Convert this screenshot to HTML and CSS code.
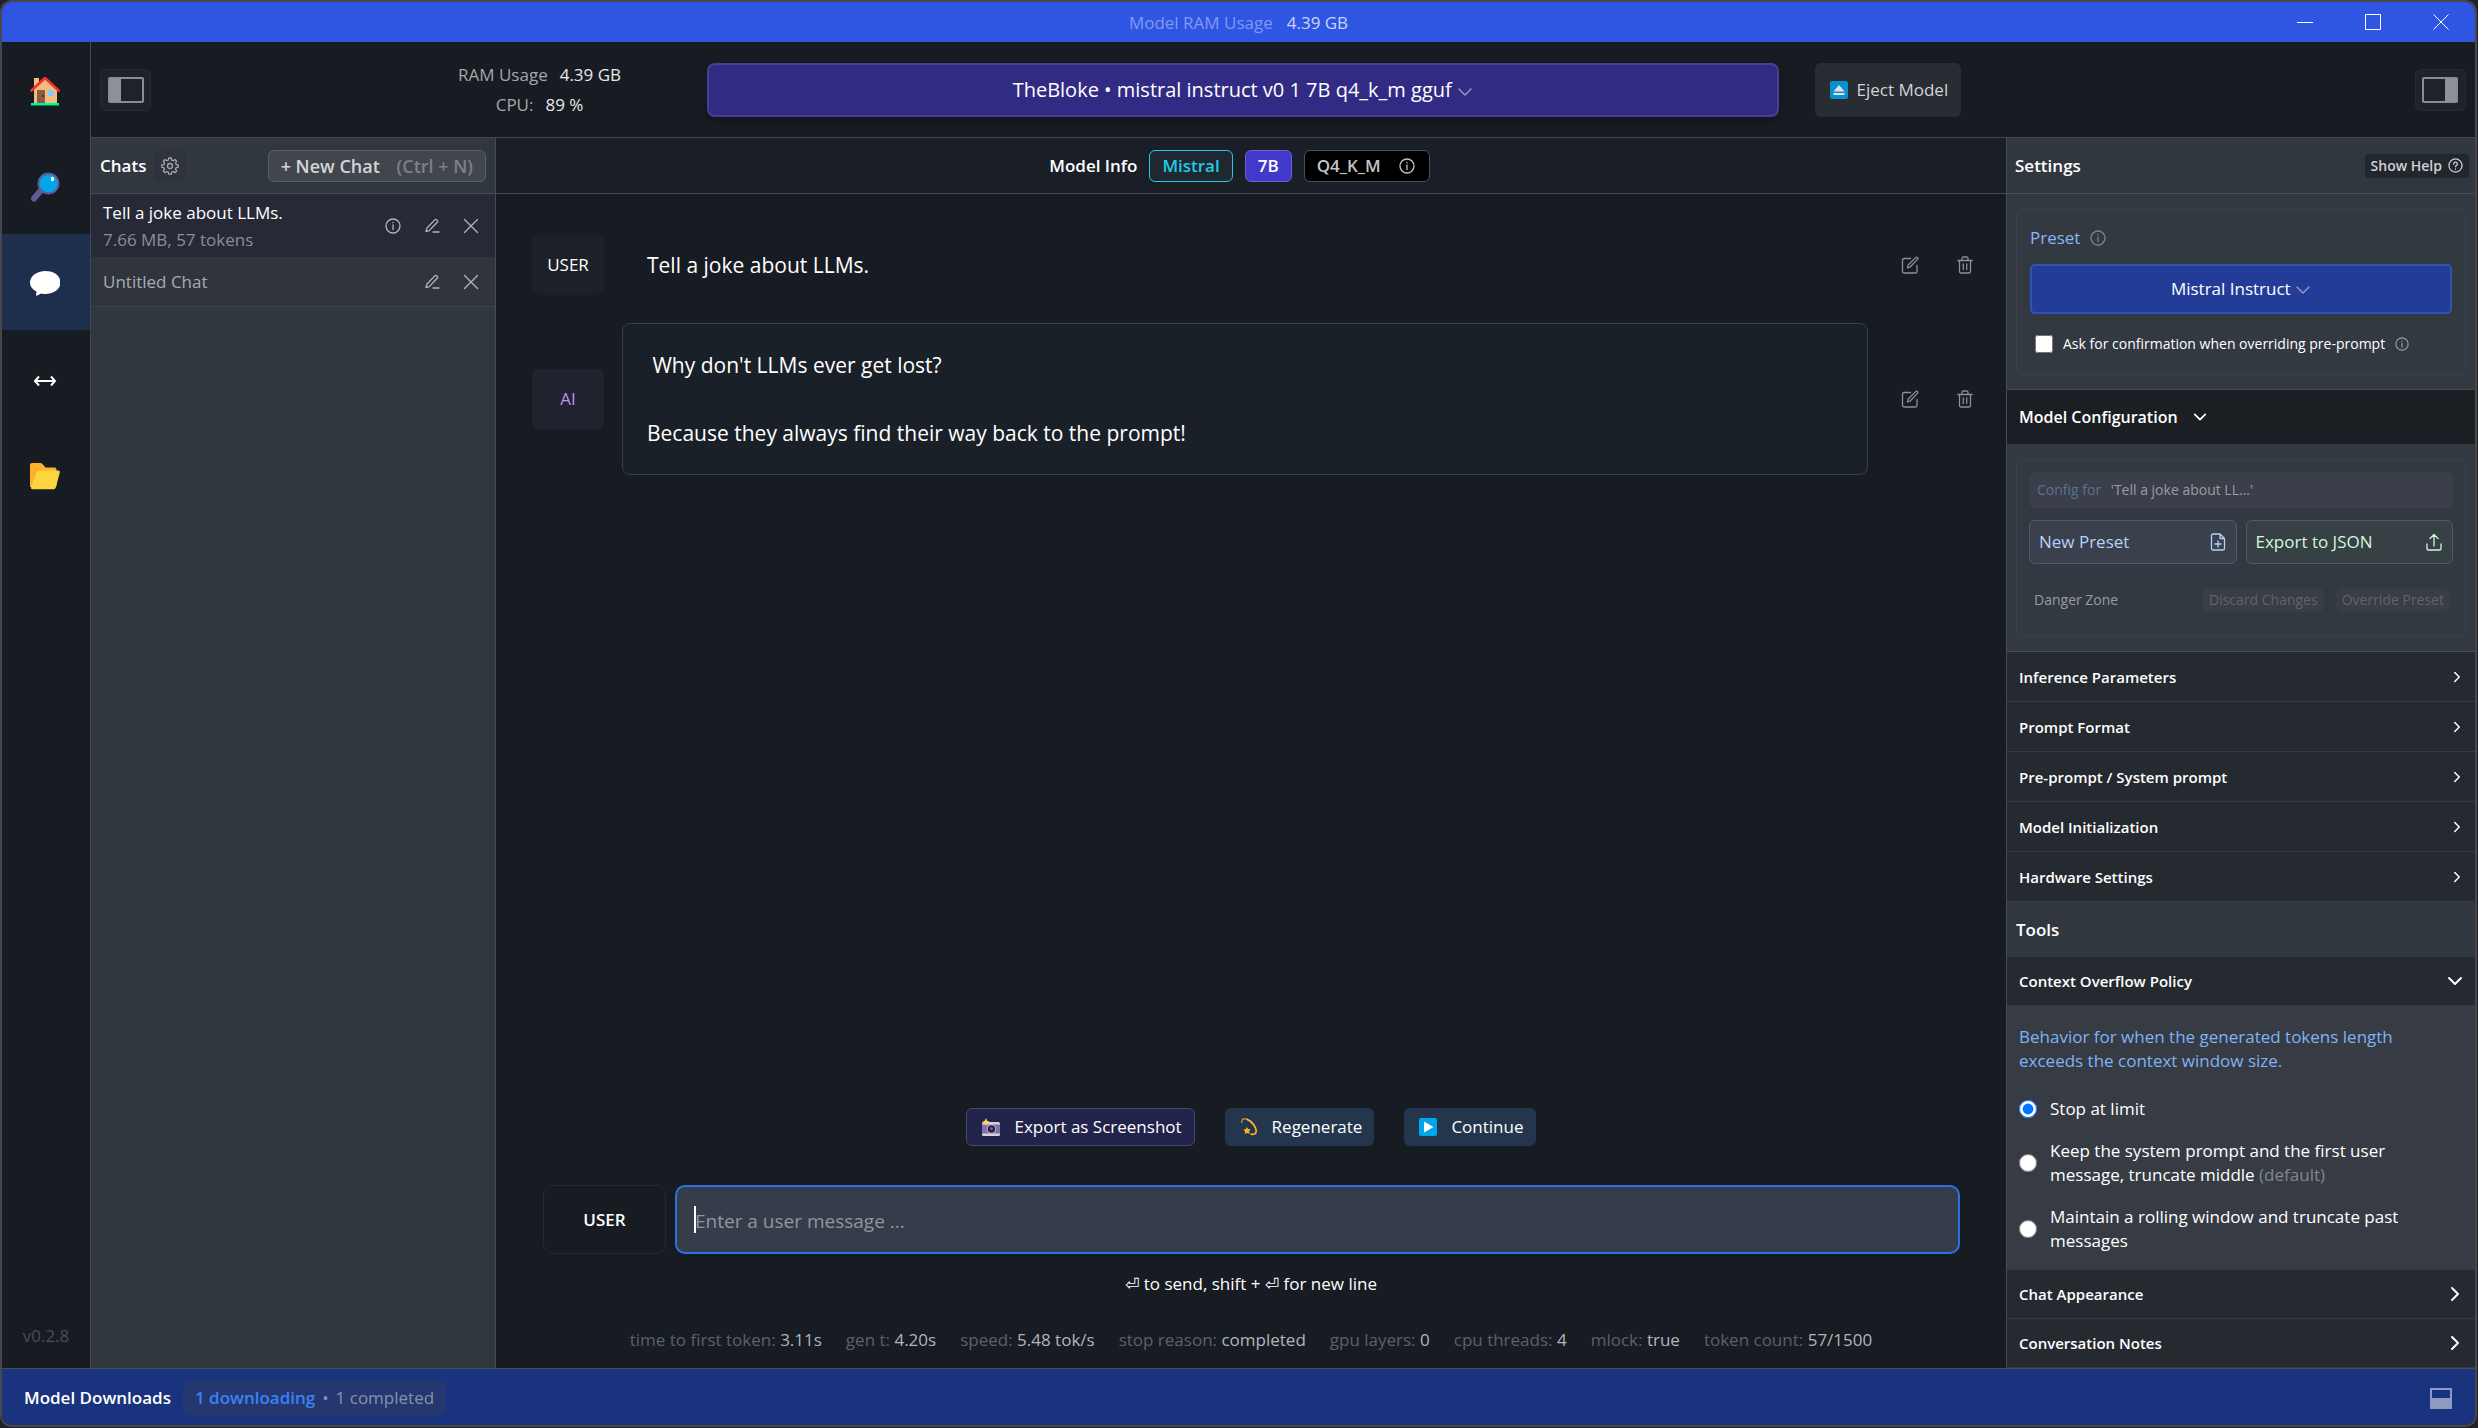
FILE: index.html
```
<!DOCTYPE html>
<html lang="en">
<head>
    <meta charset="UTF-8">
    <meta name="viewport" content="width=device-width, initial-scale=1.0">
    <title>Model RAM Usage 4.39 GB</title>
    <link rel="stylesheet" href="styles.css">
</head>
<body>
    <!-- shared icons -->
    <svg class="sprite" aria-hidden="true">
        <symbol id="chevron-down" viewBox="0 0 16 16"><path d="M2 5l6 6 6-6"/></symbol>
        <symbol id="chevron-right" viewBox="0 0 16 16"><path d="M5 2l6 6-6 6"/></symbol>
        <symbol id="info" viewBox="0 0 16 16"><circle cx="8" cy="8" r="7"/><path d="M8 7v4.500M8 4.300v.4"/></symbol>
        <symbol id="help" viewBox="0 0 16 16"><circle cx="8" cy="8" r="7"/><path d="M6 6.500a2 2 0 1 1 2.900 1.600c-.6.3-.9.600-.9 1.200M8 11.600v.3"/></symbol>
        <symbol id="pencil" viewBox="0 0 16 16"><path d="M2 13.500l.8-3.300 8-8.300a1.300 1.300 0 0 1 2 0l.4.400a1.300 1.300 0 0 1 0 2l-8 8.300zM9 14h6"/></symbol>
        <symbol id="close" viewBox="0 0 16 16"><path d="M1.500 1.500l13 13M14.500 1.500l-13 13"/></symbol>
        <symbol id="edit" viewBox="0 0 18 18"><path d="M9.500 2.500H3A1.500 1.500 0 0 0 1.500 4v11.500A1.500 1.500 0 0 0 3 17h11.500a1.500 1.500 0 0 0 1.500-1.500V9.500M6.500 12l.5-2.700 7.600-7.700a1.200 1.200 0 0 1 1.800 0 1.200 1.200 0 0 1 0 1.800l-7.500 7.800z"/></symbol>
        <symbol id="trash" viewBox="0 0 18 18"><path d="M1.800 4.500h14.400M3.500 4.500v11A1.500 1.500 0 0 0 5 17h8a1.500 1.500 0 0 0 1.500-1.500v-11M6 4.500V2.300A1.300 1.300 0 0 1 7.300 1h3.400A1.300 1.300 0 0 1 12 2.300v2.200M7.300 8v5.500M10.700 8v5.500"/></symbol>
    </svg>

    <div class="app">
        <div class="titlebar">
            <div class="titlebar-text"><span class="faded">Model RAM Usage</span><span>4.39 GB</span></div>
            <div class="window-controls">
                <button aria-label="Minimize"><svg viewBox="0 0 16 16"><path d="M0 8.500h16"/></svg></button>
                <button aria-label="Maximize"><svg viewBox="0 0 16 16"><path d="M.5.5h15v15H.5z"/></svg></button>
                <button aria-label="Close"><svg viewBox="0 0 16 16"><path d="M.5.5l15 15M15.500.5l-15 15"/></svg></button>
            </div>
        </div>

        <div class="body">
            <nav class="rail">
                <a href="#home" aria-label="Home">
                    <svg viewBox="0 0 30 30"><path fill="#f3bd7b" d="M4 2h5v6l6-5.500L27 14v13H4z"/><path fill="#8d5a48" d="M7 14h8v13H7z"/><circle cx="13" cy="20" r="1" fill="#3f2b2b"/><path fill="#8bc8fb" d="M18 14h6v6h-6z"/><path fill="none" stroke="#f9312f" stroke-width="2.600" stroke-linecap="round" stroke-linejoin="round" d="M1.500 14.500L15 2l13.500 12.500"/><path fill="#00f593" d="M1 27h28v2.500H1z"/></svg>
                </a>
                <a href="#search" aria-label="Search">
                    <svg viewBox="0 0 30 30"><path stroke="#635994" stroke-width="6" stroke-linecap="round" d="M4 26.500l6-7"/><circle cx="18.500" cy="11.500" r="10" fill="#00a6ed" stroke="#635994" stroke-width="2"/><ellipse cx="22.500" cy="7" rx="1.700" ry="2.300" fill="#fff"/></svg>
                </a>
                <a href="#chat" class="active" aria-label="Chat">
                    <svg viewBox="0 0 30 30"><path fill="#fff" d="M15.500 3C24 3 30.500 8 30.500 14.500S24 26 15.500 26c-1.600 0-2.900-.1-4.200-.5L6 28l.5-4.500C2.500 21.500 0 18.500 0 14.500 0 8 7 3 15.500 3z"/></svg>
                </a>
                <a href="#server" aria-label="Local server">
                    <svg viewBox="0 0 30 30"><path fill="none" stroke="#fff" stroke-width="2" d="M5 17h20M9 12.500L5 17l4 4.500M21 12.500l4 4.500-4 4.500"/></svg>
                </a>
                <a href="#models" aria-label="My models">
                    <svg viewBox="0 0 30 30"><path fill="#ffb02e" d="M0 27V5a2 2 0 0 1 2-2h8q1.500 0 2.500 1l3 3.500h9a2 2 0 0 1 2 2V26z"/><path fill="#fcd53f" d="M9.500 10.500h18.700q2 0 1.600 2l-4 15q-.6 1.700-2.300 1.700H2.500q-1.900 0-1.400-1.900l5.400-15q.7-1.800 3-1.800z"/></svg>
                </a>
                <span class="version">v0.2.8</span>
            </nav>

            <div class="workspace">
                <header class="topbar">
                    <div class="topbar-left">
                        <button class="panel-toggle" aria-label="Toggle chats panel"><span class="panel-icon left"></span></button>
                        <div class="usage">
                            <div><span>RAM Usage</span><b>4.39 GB</b></div>
                            <div><span>CPU:</span><b>89 %</b></div>
                        </div>
                    </div>
                    <button class="model-select" aria-haspopup="listbox">TheBloke • mistral instruct v0 1 7B q4_k_m gguf <svg class="icon"><use href="#chevron-down"/></svg></button>
                    <div class="topbar-right">
                        <button class="eject">
                            <svg class="emoji" viewBox="0 0 18 18"><rect width="18" height="18" rx="2" fill="#0a91cd"/><path fill="#dfe3e8" d="M9 4l5.500 6.500h-11zM3.500 12h11v2h-11z"/></svg>
                            Eject Model
                        </button>
                        <button class="panel-toggle" aria-label="Toggle settings panel"><span class="panel-icon right"></span></button>
                    </div>
                </header>

                <div class="columns">
                    <aside class="chats">
                        <div class="panel-head">
                            <h2>Chats</h2>
                            <button class="gear" aria-label="Chat settings"><svg class="icon" viewBox="0 0 18 18"><circle cx="9" cy="9" r="2.500"/><path d="M7.700 1h2.600l.4 2.100 1.500.6 1.800-1.200L15.700 4.200l-1.200 1.800.6 1.500 2.100.4v2.400l-2.100.4-.6 1.500 1.200 1.800-1.700 1.700-1.800-1.200-1.500.6-.4 2.100H7.700l-.4-2.100-1.500-.6L4 15.700 2.300 14l1.200-1.800-.6-1.500L.8 10.300V7.900l2.100-.4.6-1.500-1.200-1.800L4 2.500l1.800 1.200 1.500-.6z"/></svg></button>
                            <button class="new-chat">+ New Chat <span>(Ctrl + N)</span></button>
                        </div>
                        <div class="chat-row selected">
                            <div class="chat-name">Tell a joke about LLMs.<small>7.66 MB, 57 tokens</small></div>
                            <button aria-label="Info"><svg class="icon"><use href="#info"/></svg></button>
                            <button aria-label="Rename"><svg class="icon"><use href="#pencil"/></svg></button>
                            <button aria-label="Delete"><svg class="icon"><use href="#close"/></svg></button>
                        </div>
                        <div class="chat-row">
                            <div class="chat-name">Untitled Chat</div>
                            <button aria-label="Rename"><svg class="icon"><use href="#pencil"/></svg></button>
                            <button aria-label="Delete"><svg class="icon"><use href="#close"/></svg></button>
                        </div>
                    </aside>

                    <main class="conversation">
                        <div class="model-info">
                            <span>Model Info</span>
                            <span class="tag arch">Mistral</span>
                            <span class="tag params">7B</span>
                            <span class="tag quant">Q4_K_M <svg class="icon"><use href="#info"/></svg></span>
                        </div>

                        <div class="messages">
                            <div class="message">
                                <button class="role">USER</button>
                                <div class="bubble plain">Tell a joke about LLMs.</div>
                                <button class="tool" aria-label="Edit"><svg class="icon"><use href="#edit"/></svg></button>
                                <button class="tool" aria-label="Delete"><svg class="icon"><use href="#trash"/></svg></button>
                            </div>
                            <div class="message">
                                <button class="role ai">AI</button>
                                <div class="bubble"> Why don't LLMs ever get lost?

Because they always find their way back to the prompt!</div>
                                <button class="tool" aria-label="Edit"><svg class="icon"><use href="#edit"/></svg></button>
                                <button class="tool" aria-label="Delete"><svg class="icon"><use href="#trash"/></svg></button>
                            </div>
                        </div>

                        <div class="actions">
                            <button class="export">
                                <svg class="emoji" viewBox="0 0 18 18"><path fill="#d3d3dc" d="M0 5.500q0-1.500 1.500-1.500h15q1.500 0 1.500 1.500v11q0 1.500-1.500 1.500h-15Q0 18 0 16.500z"/><path fill="#7d72ad" d="M0 6.500h18v9H0z"/><circle cx="9.500" cy="11" r="4.700" fill="#cdc4d6"/><circle cx="9.500" cy="11" r="3.800" fill="#321b41"/><circle cx="9.500" cy="10.500" r="1.300" fill="#8d65c5"/><path fill="#fcd53f" d="M4 0l1.200 2.800L8 4 5.200 5.200 4 8 2.800 5.200 0 4l2.800-1.200z"/></svg>
                                Export as Screenshot
                            </button>
                            <button>
                                <svg class="emoji" viewBox="0 0 18 20"><path fill="none" stroke="#ffb02e" stroke-width="1.200" stroke-linecap="round" d="M1 5C.5 1 3.500 0 7 1.500"/><path fill="none" stroke="#ffb02e" stroke-width="2" stroke-linecap="round" d="M7 1.500c6 2.500 10.500 9.500 10 13.500-.4 3-3 3.500-5.500 3"/><path fill="#ffb02e" d="M6.500 10l1.500 2.300 2.800.2-1.700 2.200.7 2.800L7 16.600l-2.600 1.300.2-2.900-2-2.100 2.800-.4z"/></svg>
                                Regenerate
                            </button>
                            <button>
                                <svg class="emoji" viewBox="0 0 18 18"><rect width="18" height="18" rx="2" fill="#00a6ed"/><path fill="#fff" d="M5 3.500L14.500 9 5 14.500z"/></svg>
                                Continue
                            </button>
                        </div>

                        <div class="composer">
                            <button class="composer-role">USER</button>
                            <div class="composer-field">
                                <textarea rows="1" aria-label="Message" placeholder="Enter a user message ..."></textarea>
                                <span class="caret"></span>
                            </div>
                        </div>
                        <div class="hint">⏎ to send, shift + ⏎ for new line</div>
                        <div class="stats">
                            <span>time to first token: <b>3.11s</b></span>
                            <span>gen t: <b>4.20s</b></span>
                            <span>speed: <b>5.48 tok/s</b></span>
                            <span>stop reason: <b>completed</b></span>
                            <span>gpu layers: <b>0</b></span>
                            <span>cpu threads: <b>4</b></span>
                            <span>mlock: <b>true</b></span>
                            <span>token count: <b>57/1500</b></span>
                        </div>
                    </main>

                    <aside class="settings">
                        <div class="panel-head">
                            <h2>Settings</h2>
                            <button class="show-help">Show Help <svg class="icon"><use href="#help"/></svg></button>
                        </div>

                        <div class="section">
                            <div class="card preset">
                                <div class="preset-label">Preset <svg class="icon"><use href="#info"/></svg></div>
                                <button class="preset-select" aria-haspopup="listbox">Mistral Instruct <svg class="icon"><use href="#chevron-down"/></svg></button>
                                <label class="confirm"><input type="checkbox"> Ask for confirmation when overriding pre-prompt <svg class="icon"><use href="#info"/></svg></label>
                            </div>
                        </div>

                        <button class="config-head">Model Configuration <svg class="icon"><use href="#chevron-down"/></svg></button>
                        <div class="section">
                            <div class="card config">
                                <div class="config-for"><span>Config for</span> 'Tell a joke about LL...'</div>
                                <div class="config-buttons">
                                    <button class="new-preset">New Preset <svg class="icon" viewBox="0 0 16 18"><path d="M10 1H3a1.500 1.500 0 0 0-1.500 1.500v13A1.500 1.500 0 0 0 3 17h10a1.500 1.500 0 0 0 1.500-1.500V5.500zM10 1v4.500h4.500M8 8v6M5 11h6"/></svg></button>
                                    <button class="export-json">Export to JSON <svg class="icon" viewBox="0 0 16 18"><path d="M1 11v4.500A1.300 1.300 0 0 0 2.300 17h11.400a1.300 1.300 0 0 0 1.300-1.500V11M8 13V2M4 5.500L8 1.500l4 4"/></svg></button>
                                </div>
                                <div class="danger">
                                    <span>Danger Zone</span>
                                    <button disabled>Discard Changes</button>
                                    <button disabled>Override Preset</button>
                                </div>
                            </div>
                        </div>

                        <button class="row">Inference Parameters <svg class="icon"><use href="#chevron-right"/></svg></button>
                        <button class="row">Prompt Format <svg class="icon"><use href="#chevron-right"/></svg></button>
                        <button class="row">Pre-prompt / System prompt <svg class="icon"><use href="#chevron-right"/></svg></button>
                        <button class="row">Model Initialization <svg class="icon"><use href="#chevron-right"/></svg></button>
                        <button class="row">Hardware Settings <svg class="icon"><use href="#chevron-right"/></svg></button>

                        <h2 class="tools-title">Tools</h2>
                        <button class="row tool-row">Context Overflow Policy <svg class="icon"><use href="#chevron-down"/></svg></button>
                        <div class="policy">
                            <p>Behavior for when the generated tokens length exceeds the context window size.</p>
                            <label><input type="radio" name="policy" checked><span>Stop at limit</span></label>
                            <label><input type="radio" name="policy"><span>Keep the system prompt and the first user message, truncate middle <i>(default)</i></span></label>
                            <label><input type="radio" name="policy"><span>Maintain a rolling window and truncate past messages</span></label>
                        </div>
                        <button class="row tool-row">Chat Appearance <svg class="icon"><use href="#chevron-right"/></svg></button>
                        <button class="row tool-row">Conversation Notes <svg class="icon"><use href="#chevron-right"/></svg></button>
                    </aside>
                </div>
            </div>
        </div>

        <footer class="downloads">
            <h2>Model Downloads</h2>
            <div class="download-status"><b>1 downloading</b><span>•</span>1 completed</div>
            <button aria-label="Toggle downloads panel"><span class="panel-icon bottom"></span></button>
        </footer>
    </div>
</body>
</html>
```
FILE: styles.css
```
* {
    box-sizing: border-box;
}
body {
    margin: 0;
    padding: 0 1px 1px 0;
    height: 100vh;
    background: #202227;
    color: #fff;
    font: 17px/24px "Open Sans", "Noto Sans", "DejaVu Sans", sans-serif;
}
h2, p {
    margin: 0;
}
h2 {
    font-size: 17px;
    font-weight: 600;
}
button {
    font: inherit;
    color: inherit;
    background: none;
    border: none;
    padding: 0;
    cursor: pointer;
}
b {
    font-weight: 400;
}
.sprite {
    display: none;
}
.icon {
    width: 16px;
    height: 16px;
    flex: none;
    fill: none;
    stroke: currentColor;
    stroke-width: 1.3;
    stroke-linecap: round;
    stroke-linejoin: round;
}
.emoji {
    width: 18px;
    height: 18px;
    flex: none;
}
.app {
    height: 100%;
    display: flex;
    flex-direction: column;
    border: 2px solid #46484d;
    border-radius: 12px;
    overflow: hidden;
    background: #171b22;
}

/* title bar */
.titlebar {
    flex: none;
    height: 40px;
    display: grid;
    grid-template-columns: 1fr auto 1fr;
    align-items: center;
    background: #2f55e3;
}
.titlebar-text {
    grid-column: 2;
    display: flex;
    gap: 14px;
    padding-top: 2px;
    color: #c9d4fa;
}
.titlebar-text .faded {
    color: #8299f0;
}
.window-controls {
    justify-self: end;
    display: flex;
}
.window-controls button {
    width: 68px;
    height: 40px;
    display: flex;
    align-items: center;
    justify-content: center;
}
.window-controls svg {
    width: 16px;
    height: 16px;
    fill: none;
    stroke: #fff;
}

.body {
    flex: 1;
    min-height: 0;
    display: flex;
}
.rail {
    flex: none;
    width: 89px;
    display: flex;
    flex-direction: column;
    border-right: 1px solid #43464e;
}
.rail a {
    height: 96px;
    padding: 2px 2px 0 0;
    display: flex;
    align-items: center;
    justify-content: center;
}
.rail a.active {
    background: #1e2f4d;
}
.rail svg {
    width: 30px;
    height: 30px;
}
.version {
    margin: auto auto 20px;
    color: #4a4e54;
}
.workspace {
    flex: 1;
    min-width: 0;
    display: flex;
    flex-direction: column;
}

/* top bar */
.topbar {
    flex: none;
    height: 96px;
    padding-top: 1px;
    display: grid;
    grid-template-columns: 23fr 40fr 26fr;
    align-items: center;
    border-bottom: 1px solid #43464e;
}
.topbar-left, .topbar-right {
    display: flex;
    align-items: center;
    justify-content: space-between;
}
.topbar-left {
    padding: 0 86px 0 9px;
}
.topbar-right {
    padding: 0 9px 0 36px;
}
.panel-toggle {
    width: 51px;
    height: 42px;
    display: flex;
    align-items: center;
    justify-content: center;
    background: #1e2229;
    border: 1px solid #262a31;
    border-radius: 6px;
}
.panel-icon {
    width: 36px;
    height: 26px;
    border: 2px solid #8b8d92;
    border-radius: 2px;
}
.panel-icon.left {
    background: linear-gradient(to right, #8f9196 11px, transparent 11px);
}
.panel-icon.right {
    background: linear-gradient(to left, #8f9196 11px, transparent 11px);
}
.panel-icon.bottom {
    display: block;
    width: 22px;
    height: 21px;
    border-color: #8f9ac2;
    border-radius: 0;
    background: linear-gradient(to top, #8f9ac2 9px, transparent 9px);
}
.usage {
    color: #a4a6aa;
    line-height: 30px;
    text-align: center;
}
.usage b {
    margin-left: 12px;
    color: #e8e9ea;
}
.model-select {
    height: 54px;
    font-size: 20px;
    background: #322b84;
    border: 2px solid #463f92;
    border-radius: 8px;
    box-shadow: 0 4px 8px rgba(0, 0, 0, 0.2);
}
.model-select .icon, .preset-select .icon {
    vertical-align: middle;
    color: #a09fc6;
}
.eject {
    height: 54px;
    padding: 0 13px 0 15px;
    display: flex;
    align-items: center;
    gap: 9px;
    color: #d2d3d5;
    background: #282c33;
    border-radius: 6px;
}

.columns {
    flex: 1;
    min-height: 0;
    display: flex;
}
.panel-head, .model-info {
    flex: none;
    height: 56px;
    display: flex;
    align-items: center;
    border-bottom: 1px solid #484b54;
}

/* chats */
.chats {
    flex: none;
    width: 405px;
    background: #31373f;
    border-right: 1px solid #484b54;
}
.chats .panel-head {
    padding: 0 9px;
}
.gear {
    width: 32px;
    height: 32px;
    margin-left: 8px;
    display: flex;
    align-items: center;
    justify-content: center;
    color: #a5a8ad;
    background: #2e333c;
    border-radius: 6px;
}
.gear .icon {
    width: 18px;
    height: 18px;
}
.new-chat {
    height: 32px;
    margin-left: auto;
    padding: 0 12px;
    font-size: 18px;
    font-weight: 600;
    color: #d3d5d8;
    background: #41464d;
    border: 1px solid #5c6066;
    border-radius: 6px;
}
.new-chat span {
    margin-left: 12px;
    color: #7c8086;
}
.chat-row {
    min-height: 50px;
    padding: 4px 12px;
    display: flex;
    align-items: center;
    gap: 15px;
    color: #a8abaf;
    background: #30353d;
    border-bottom: 1px solid #3d424a;
}
.chat-row.selected {
    min-height: 63px;
    color: #fff;
    background: #262a36;
    border: none;
}
.chat-name {
    flex: 1;
    line-height: 27px;
}
.chat-name small {
    display: block;
    font-size: 17px;
    color: #8b8e95;
}
.chat-row button {
    width: 24px;
    height: 24px;
    color: #b4b6ba;
}
.chat-row .icon {
    display: block;
    margin: auto;
}

/* conversation */
.conversation {
    flex: 1;
    min-width: 0;
    display: flex;
    flex-direction: column;
}
.model-info {
    justify-content: center;
    gap: 12px;
    padding-right: 23px;
    font-weight: 600;
    background: #1a1e26;
}
.tag {
    height: 32px;
    padding: 0 12px;
    display: flex;
    align-items: center;
    border: 1px solid;
    border-radius: 6px;
}
.tag.arch {
    color: #22cbe6;
    background: #1d2830;
}
.tag.params {
    background: #4238ca;
    border-color: #6a63d6;
}
.tag.quant {
    gap: 18px;
    padding-right: 14px;
    color: #c3c4c6;
    background: #000;
    border-color: #4b4e54;
}
.messages {
    flex: 1;
    min-height: 0;
    padding: 29px 14px 0 36px;
    display: flex;
    flex-direction: column;
    gap: 16px;
}
.message {
    display: flex;
    align-items: center;
}
.role {
    flex: none;
    width: 72px;
    height: 60px;
    margin-right: 18px;
    background: #1c2027;
    border-radius: 6px;
}
.role.ai {
    color: #b795f0;
    background: #20222d;
}
.bubble {
    flex: 1;
    margin-right: 14px;
    padding: 24px;
    font-size: 21px;
    line-height: 34px;
    white-space: pre-wrap;
    background: #1a2027;
    border: 1px solid #3c3e4e;
    border-radius: 8px;
}
.bubble.plain {
    background: none;
    border-color: transparent;
}
.tool {
    width: 55px;
    height: 32px;
    color: #8d9095;
}
.tool .icon {
    display: block;
    width: 18px;
    height: 18px;
    margin: auto;
}
.actions {
    display: flex;
    justify-content: center;
    gap: 30px;
    margin-bottom: 39px;
}
.actions button {
    height: 38px;
    padding: 0 12px 0 15px;
    display: flex;
    align-items: center;
    gap: 14px;
    background: #24364d;
    border-radius: 6px;
}
.actions .export {
    background: #22234a;
    border: 1px solid #494873;
}
.composer {
    display: flex;
    gap: 9px;
    padding: 0 46px 0 47px;
}
.composer-role {
    flex: none;
    width: 123px;
    font-weight: 600;
    border: 1px solid #262b32;
    border-radius: 10px;
}
.composer-field {
    position: relative;
    flex: 1;
    display: flex;
}
.composer textarea {
    flex: 1;
    height: 69px;
    padding: 21px 18px 18px;
    resize: none;
    overflow: hidden;
    font: inherit;
    font-size: 19px;
    line-height: 26px;
    color: #fff;
    background: #353d4b;
    border: 2px solid #3070dc;
    border-radius: 10px;
    outline: none;
}
.composer textarea::placeholder {
    color: #92969d;
}
.caret {
    position: absolute;
    left: 19px;
    top: 21px;
    width: 2px;
    height: 27px;
    background: #fff;
}
.hint {
    margin-top: 18px;
    text-align: center;
}
.stats {
    display: flex;
    justify-content: center;
    gap: 24px;
    margin: 32px 0 16px;
    color: #5d6167;
}
.stats b {
    color: #b2b5b9;
}

/* settings */
.settings {
    flex: none;
    width: 469px;
    display: flex;
    flex-direction: column;
    overflow-y: auto;
    scrollbar-width: none;
    background: #31373f;
    border-left: 1px solid #484b54;
}
.settings .panel-head {
    padding: 0 6px 0 8px;
    justify-content: space-between;
}
.show-help {
    height: 24px;
    padding: 0 6px;
    display: flex;
    align-items: center;
    gap: 6px;
    font-size: 14px;
    font-weight: 600;
    color: #d0d2d5;
    background: #22262d;
    border-radius: 4px;
}
.show-help .icon {
    width: 15px;
    height: 15px;
}
.section {
    flex: none;
    padding: 15px 9px 14px;
    border-bottom: 1px solid #484b54;
    background: #333941;
}
.card {
    border: 1px solid #3b4049;
    border-radius: 6px;
}
.preset {
    padding: 16px 13px 18px;
}
.preset-label {
    display: flex;
    align-items: center;
    gap: 10px;
    color: #86b7f2;
}
.preset-label .icon {
    color: #7e838a;
}
.preset-select {
    width: 100%;
    height: 50px;
    margin: 14px 0 18px;
    background: #233c98;
    border: 2px solid #3153b4;
    border-radius: 5px;
}
.confirm {
    display: flex;
    align-items: center;
    gap: 10px;
    font-size: 14px;
}
.confirm input {
    width: 18px;
    height: 18px;
    margin: 0 0 0 5px;
}
.confirm .icon {
    width: 14px;
    height: 14px;
    color: #9a9ea3;
}
.config-head {
    flex: none;
    height: 54px;
    padding: 0 12px;
    display: flex;
    align-items: center;
    gap: 15px;
    font-size: 16px;
    font-weight: 600;
    background: #1b1e22;
}
.config-head .icon {
    width: 14px;
    height: 14px;
    stroke-width: 2;
}
.config {
    height: 178px;
    padding: 12px;
    font-size: 14px;
}
.config-for {
    height: 36px;
    padding: 6px 8px;
    color: #9a9da3;
    background: #3a3f4a;
    border-radius: 6px;
}
.config-for span {
    margin-right: 6px;
    color: #5b7291;
}
.config-buttons {
    display: grid;
    grid-template-columns: 1fr 1fr;
    gap: 9px;
    margin: 12px 0 24px;
    font-size: 17px;
}
.config-buttons button {
    height: 44px;
    padding: 0 10px 0 9px;
    display: flex;
    align-items: center;
    justify-content: space-between;
    border: 1px solid;
    border-radius: 6px;
}
.config-buttons .icon {
    height: 18px;
}
.config-buttons .new-preset {
    color: #b5d2fa;
    background: #3a404c;
    border-color: #505c72;
}
.config-buttons .export-json {
    color: #d3f7dd;
    background: #374044;
    border-color: #4b6357;
}
.danger {
    display: flex;
    gap: 12px;
    padding: 0 3px 0 5px;
    color: #999da2;
}
.danger span {
    margin-right: auto;
}
.danger button {
    padding: 0 6px;
    color: #5f646d;
    background: #383d46;
    border-radius: 6px;
}
.row {
    flex: none;
    height: 50px;
    padding: 0 12px;
    display: flex;
    align-items: center;
    justify-content: space-between;
    font-size: 15px;
    font-weight: 600;
    background: #252930;
    border-bottom: 1px solid #353a43;
}
.row .icon {
    width: 12px;
    height: 12px;
    stroke-width: 2;
}
.row.tool-row {
    height: 49px;
}
.row.tool-row .icon {
    width: 16px;
    height: 16px;
}
.tools-title {
    flex: none;
    padding: 15px 9px;
    line-height: 25px;
}
.policy {
    flex: none;
    padding: 19px 60px 17px 12px;
    display: flex;
    flex-direction: column;
    gap: 18px;
    background: #363b44;
}
.policy p {
    margin-bottom: 6px;
    color: #7eb3f5;
}
.policy label {
    display: flex;
    align-items: center;
    gap: 13px;
}
.policy input {
    flex: none;
    width: 18px;
    height: 18px;
    margin: 0;
}
.policy i {
    font-style: normal;
    color: #83878d;
}

/* downloads bar */
.downloads {
    flex: none;
    height: 57px;
    padding: 2px 23px 0 22px;
    display: flex;
    align-items: center;
    gap: 12px;
    background: #1a337e;
    border-top: 1px solid #484b54;
}
.download-status {
    padding: 6px 12px;
    color: #8790b0;
    background: #24386f;
    border-radius: 8px;
}
.download-status b {
    font-weight: 600;
    color: #3b82f6;
}
.download-status span {
    margin: 0 7px;
}
.downloads button {
    margin-left: auto;
}
```
